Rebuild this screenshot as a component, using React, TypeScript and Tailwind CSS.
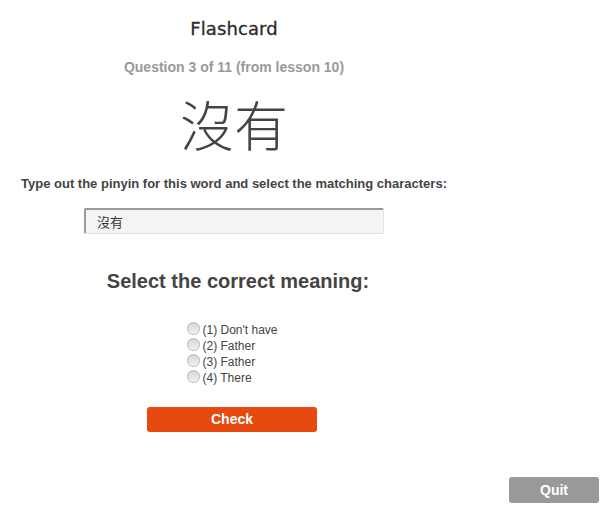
export default function App() {
  const options = ["(1) Don't have", '(2) Father', '(3) Father', '(4) There'];

  return (
    <div className="w-[614px] h-[518px] bg-white flex flex-col font-['Liberation_Sans',Arial,sans-serif]">
      {/* Card */}
      <div className="w-[468px] flex flex-col items-center">
        <h1 className="mt-[18px] text-[18px] leading-[22px] text-[#2b2b2b] font-['DejaVu_Sans',sans-serif] tracking-[0.1px] [-webkit-text-stroke:0.3px_#2b2b2b]">
          Flashcard
        </h1>
        <div className="mt-[19px] text-[14px] leading-[16px] font-bold text-[#999]">
          Question 3 of 11 (from lesson 10)
        </div>
        <div className="mt-[19px] text-[54px] leading-[60px] text-[#444] font-['Noto_Sans_CJK_SC',sans-serif] font-light">
          沒有
        </div>
        <div className="mt-[22px] text-[13px] leading-[16px] font-bold text-[#444]">
          Type out the pinyin for this word and select the matching characters:
        </div>
        <input
          readOnly
          value="沒有"
          className="mt-[16px] w-[300px] h-[26px] pl-[11px] text-[13px] text-[#333] bg-[#f4f4f4] border-t-2 border-l-2 border-r border-b border-t-[#9a9a9a] border-l-[#9a9a9a] border-r-[#e2e2e2] border-b-[#e2e2e2] rounded-[2px] outline-none font-['Liberation_Sans','Noto_Sans_CJK_SC',sans-serif]"
        />
        <h2 className="mt-[35px] ml-[8px] text-[20px] leading-[24px] font-bold text-[#444]">
          Select the correct meaning:
        </h2>
        <div className="mt-[29px] mr-[4px] flex flex-col">
          {options.map((o) => (
            <label key={o} className="flex items-center h-[16px] text-[12px] text-[#444]">
              <input
                type="radio"
                name="meaning"
                className="appearance-none w-[13px] h-[13px] mr-[3px] -mt-[3px] rounded-full border border-[#b5b5b5] bg-gradient-to-b from-[#d6d6d6] to-[#f2f2f2]"
              />
              {o}
            </label>
          ))}
        </div>
        <button className="mt-[21px] mr-[4px] w-[170px] h-[25px] rounded-[3px] bg-[#e8490f] text-white text-[14px] font-bold">
          Check
        </button>
      </div>

      {/* Footer */}
      <div className="mt-[45px] flex justify-end pr-[15px]">
        <button className="w-[90px] h-[26px] rounded-[3px] bg-[#999] text-white text-[14px] font-bold">
          Quit
        </button>
      </div>
    </div>
  );
}
